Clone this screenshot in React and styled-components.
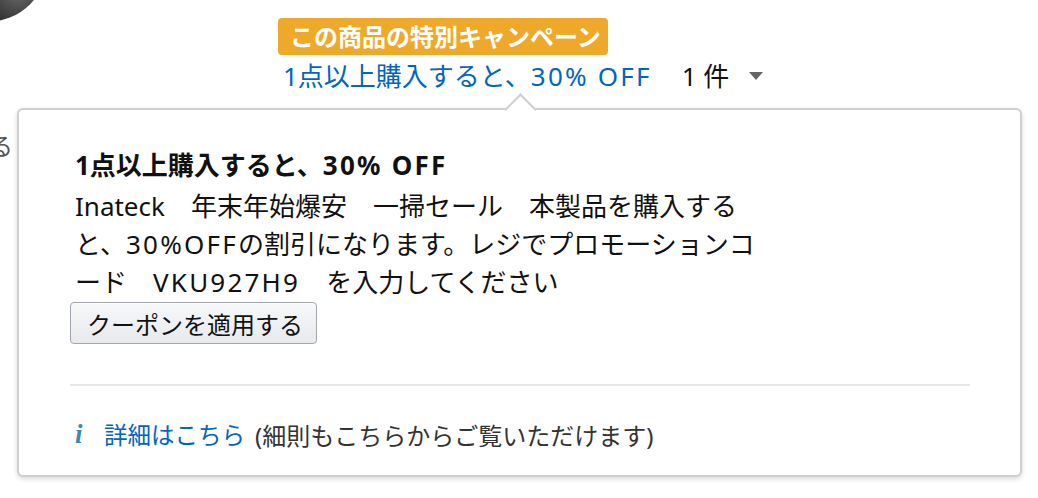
import React from 'react'
import styled, { createGlobalStyle } from 'styled-components'

const GlobalStyle = createGlobalStyle`
  html, body {
    margin: 0;
    padding: 0;
    background: #fff;
  }
  body {
    font-family: "Noto Sans", "Noto Sans CJK JP", sans-serif;
    color: #111;
  }
`

function App() {
  return (
    <>
      <GlobalStyle />
      <Page>
        {/* 左上の商品画像の切れ端 */}
        <ProductCorner />
        <CutText>る</CutText>

        <TopArea>
          <Badge>この商品の特別キャンペーン</Badge>
          <OfferRow>
            <OfferLink>1点以上購入すると、<Latin>30% OFF</Latin></OfferLink>
            <Qty>1 件</Qty>
            <Caret />
          </OfferRow>
        </TopArea>

        <Popover>
          <Arrow />
          <Body>
            <Title>1点以上購入すると、<Latin>30% OFF</Latin></Title>
            <Desc>
              Inateck　年末年始爆安　一掃セール　本製品を購入する<br />
              と、<Latin>30%OFF</Latin>の割引になります。レジでプロモーションコ<br />
              ード　<Latin>VKU927H9</Latin>　を入力してください
            </Desc>
            <CouponButton>クーポンを適用する</CouponButton>
          </Body>
          <Divider />
          <Footer>
            <InfoIcon>i</InfoIcon>
            <DetailLink>詳細はこちら</DetailLink>
            <Note>(細則もこちらからご覧いただけます)</Note>
          </Footer>
        </Popover>
      </Page>
    </>
  )
}

export default App

const Page = styled.div`
  position: relative;
  width: 1038px;
  height: 498px;
  overflow: hidden;
  background: #fff;
`

const ProductCorner = styled.div`
  position: absolute;
  left: -74px;
  top: -100px;
  width: 122px;
  height: 122px;
  border-radius: 50%;
  background: radial-gradient(circle at 75% 75%, #6a6a6a 0%, #333 25%, #1a1a1a 60%, #111 100%);
`

const CutText = styled.span`
  position: absolute;
  left: -11px;
  top: 127px;
  font-size: 24px;
  color: #555;
`

const TopArea = styled.div`
  padding: 18px 0 0 278px;
`

const Badge = styled.div`
  display: inline-block;
  height: 37px;
  line-height: 37px;
  padding: 0 7px 0 12px;
  background: #efa92a;
  color: #fff;
  font-size: 24px;
  font-weight: 700;
  border-radius: 4px;
`

const OfferRow = styled.div`
  display: flex;
  align-items: center;
  height: 38px;
  margin-top: 1px;
  padding-left: 5px;
`

// 英数字は参照画像のフォントより細いので少し字間を広げる
const Latin = styled.span`
  letter-spacing: 0.085em;
`

const OfferLink = styled.span`
  color: #0066c0;
  font-size: 26px;
`

const Qty = styled.span`
  margin-left: 30px;
  font-size: 26px;
  color: #111;
`

const Caret = styled.span`
  margin-left: 20px;
  margin-top: 2px;
  width: 0;
  height: 0;
  border-left: 7px solid transparent;
  border-right: 7px solid transparent;
  border-top: 8px solid #666;
`

const Popover = styled.div`
  position: relative;
  box-sizing: border-box;
  width: 1005px;
  height: 369px;
  margin: 14px 0 0 17px;
  padding: 36px 50px 0 51px;
  border: 2px solid #cfcfcf;
  border-radius: 6px;
  box-shadow: 0 2px 5px rgba(0, 0, 0, 0.15);
  background: #fff;
`

const Arrow = styled.span`
  position: absolute;
  left: 490px;
  top: -12px;
  width: 21px;
  height: 21px;
  background: #fff;
  border-left: 2px solid #cfcfcf;
  border-top: 2px solid #cfcfcf;
  transform: rotate(45deg);
`

const Body = styled.div`
  padding-left: 5px;
`

const Title = styled.div`
  font-size: 26px;
  font-weight: 700;
  line-height: 38px;
  margin-bottom: 3px;
  white-space: nowrap;
`

const Desc = styled.div`
  font-size: 26px;
  line-height: 38px;
  color: #111;
  white-space: nowrap;
`

const CouponButton = styled.button`
  display: block;
  height: 42px;
  margin: 1px 0 0 -5px;
  padding: 0 13px 0 16px;
  font-family: inherit;
  font-size: 24px;
  color: #111;
  background: linear-gradient(to bottom, #f7f8fa, #e7e9ec);
  border: 1px solid #a2a6ac;
  border-radius: 4px;
  box-shadow: 0 1px 0 rgba(255, 255, 255, 0.6) inset;
`

const Divider = styled.div`
  height: 2px;
  margin-top: 40px;
  background: #e7e7e7;
`

const Footer = styled.div`
  display: flex;
  align-items: center;
  height: 38px;
  margin-top: 29px;
  padding-left: 5px;
  font-size: 23.5px;
`

const InfoIcon = styled.span`
  font-family: "Liberation Serif", serif;
  font-style: italic;
  font-weight: 700;
  font-size: 27px;
  color: #3f87ad;
  width: 29px;
`

const DetailLink = styled.span`
  color: #0066c0;
`

const Note = styled.span`
  margin-left: 10px;
  font-size: 24px;
  color: #333;
`
